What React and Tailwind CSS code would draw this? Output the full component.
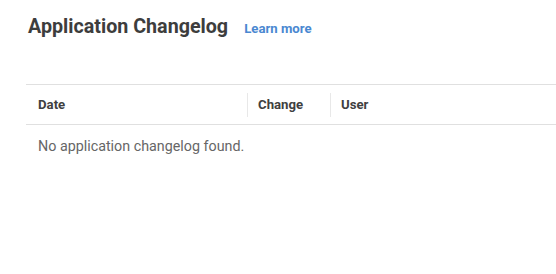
export default function App() {
  return (
    <div className="w-[556px] h-[274px] bg-white" style={{ fontFamily: "Roboto, 'Liberation Sans', sans-serif" }}>
      <div className="flex items-baseline pl-[28px] pt-[13px]">
        <h1 className="text-[19.7px] font-bold text-[#3d3d3d] leading-[28px]">Application Changelog</h1>
        <a className="ml-[16px] text-[13.2px] font-bold text-[#4a88d1]">Learn more</a>
      </div>
      <div className="ml-[26px] mt-[43px]">
        <div className="flex items-center h-[41px] border-t border-b border-[#e0e0e0]">
          <div className="w-[222px] pl-[12px] text-[13.2px] font-bold text-[#404040] border-r border-[#e8e8e8] h-[24px] flex items-center">Date</div>
          <div className="w-[83px] pl-[10px] text-[13.2px] font-bold text-[#404040] border-r border-[#e8e8e8] h-[24px] flex items-center">Change</div>
          <div className="pl-[10px] text-[13.2px] font-bold text-[#404040] h-[24px] flex items-center">User</div>
        </div>
        <div className="pl-[12px] pt-[11px] text-[14.3px] text-[#666666]">No application changelog found.</div>
      </div>
    </div>
  );
}
